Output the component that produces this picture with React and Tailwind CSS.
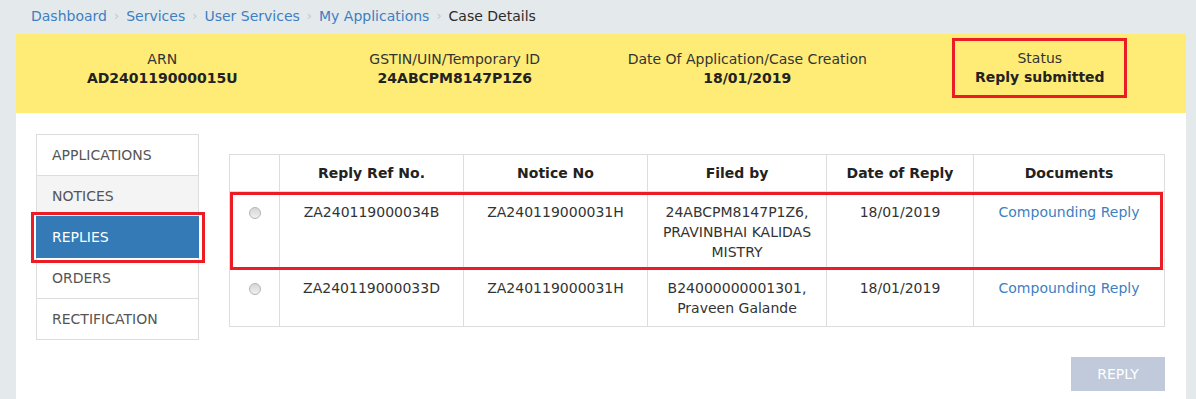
import React from "react";

const crumbs = ["Dashboard", "Services", "User Services", "My Applications"];

const navItems = ["APPLICATIONS", "NOTICES", "REPLIES", "ORDERS", "RECTIFICATION"];

const replies = [
    {
        id: 1,
        refNo: "ZA240119000034B",
        noticeNo: "ZA240119000031H",
        filedBy: ["24ABCPM8147P1Z6,", "PRAVINBHAI KALIDAS", "MISTRY"],
        date: "18/01/2019",
        doc: "Compounding Reply",
    },
    {
        id: 2,
        refNo: "ZA240119000033D",
        noticeNo: "ZA240119000031H",
        filedBy: ["B24000000001301,", "Praveen Galande"],
        date: "18/01/2019",
        doc: "Compounding Reply",
    },
];

function Radio() {
    return (
        <span className="inline-block w-[12px] h-[12px] rounded-full border border-[#b5b5b5] bg-gradient-to-b from-[#d6d6d6] to-[#f0f0f0] align-middle" />
    );
}

function App() {
    return (
        <div className="min-h-screen flex flex-col bg-[#e4e9ec] text-[14px] text-[#333] font-['DejaVu_Sans',Verdana,sans-serif]">

            {/* Breadcrumb */}

            <div className="h-[34px] pl-[31px] flex items-center pb-[2px]">
                {crumbs.map((c) => (
                    <span key={c} className="flex items-center">
                        <span className="text-[#3d7fc2]">{c}</span>
                        <span className="px-[7px] text-[#c2c7cc] text-[13px]">›</span>
                    </span>
                ))}
                <span className="text-[#2b2b2b]">Case Details</span>
            </div>

            <div className="mx-[16px] w-[1170px] flex-1 flex flex-col">

                {/* Case summary */}

                <div className="h-[79px] bg-[#feec76] grid grid-cols-4 items-start pt-[16px] leading-[19px] text-center">
                    <div>
                        <div>ARN</div>
                        <div className="font-bold text-[#222]">AD240119000015U</div>
                    </div>
                    <div>
                        <div>GSTIN/UIN/Temporary ID</div>
                        <div className="font-bold text-[#222]">24ABCPM8147P1Z6</div>
                    </div>
                    <div>
                        <div>Date Of Application/Case Creation</div>
                        <div className="font-bold text-[#222]">18/01/2019</div>
                    </div>
                    <div className="flex justify-center">
                        <div className="w-[175px] -mt-[12px] py-[8px] border-[3px] border-[#ec1c24]">
                            <div>Status</div>
                            <div className="font-bold text-[#222]">Reply submitted</div>
                        </div>
                    </div>
                </div>

                {/* Content */}

                <div className="flex-1 bg-white flex pl-[20px] pr-[22px] pt-[21px] gap-[30px]">

                    <div className="w-[163px] shrink-0 flex flex-col">
                        {navItems.map((item, i) => (
                            <div
                                key={item}
                                className={`relative h-[42px] flex items-center pl-[15px] border ${i > 0 ? "-mt-px" : ""} ${
                                    item === "REPLIES"
                                        ? "bg-[#337ab7] border-[#337ab7] text-white z-10"
                                        : item === "NOTICES"
                                        ? "bg-[#f4f4f4] border-[#dddddd] text-[#555]"
                                        : "bg-white border-[#dddddd] text-[#555]"
                                }`}
                            >
                                {item}
                                {item === "REPLIES" && (
                                    <div className="absolute -left-[6px] -top-[5px] w-[174px] h-[51px] border-[3px] border-[#ec1c24]" />
                                )}
                            </div>
                        ))}
                    </div>

                    <div className="flex-1 pt-[20px] flex flex-col">

                        <div className="relative">
                            <table className="w-[935px] table-fixed border-collapse leading-[20px] text-center">
                                <thead>
                                    <tr className="font-bold text-[#222]">
                                        <th className="w-[50px] border border-[#dddddd] py-[8px]"></th>
                                        <th className="w-[184px] border border-[#dddddd] py-[8px]">Reply Ref No.</th>
                                        <th className="w-[184px] border border-[#dddddd] py-[8px]">Notice No</th>
                                        <th className="w-[179px] border border-[#dddddd] py-[8px]">Filed by</th>
                                        <th className="w-[147px] border border-[#dddddd] py-[8px]">Date of Reply</th>
                                        <th className="w-[191px] border border-[#dddddd] py-[8px]">Documents</th>
                                    </tr>
                                </thead>
                                <tbody>
                                    {replies.map((r) => {
                                        const pad = r.id === 1 ? "pt-[10px] pb-[7px]" : "py-[8px]";
                                        return (
                                            <tr key={r.id} className="align-top">
                                                <td className={`border border-[#dddddd] ${pad}`}>
                                                    <Radio />
                                                </td>
                                                <td className={`border border-[#dddddd] ${pad}`}>{r.refNo}</td>
                                                <td className={`border border-[#dddddd] ${pad}`}>{r.noticeNo}</td>
                                                <td className={`border border-[#dddddd] ${pad}`}>
                                                    {r.filedBy.map((line) => (
                                                        <div key={line}>{line}</div>
                                                    ))}
                                                </td>
                                                <td className={`border border-[#dddddd] ${pad}`}>{r.date}</td>
                                                <td className={`border border-[#dddddd] ${pad}`}>
                                                    <a className="text-[#3d7fc2]">{r.doc}</a>
                                                </td>
                                            </tr>
                                        );
                                    })}
                                </tbody>
                            </table>

                            {/* highlighted row */}
                            <div className="absolute left-[1px] top-[38px] w-[933px] h-[78px] border-[3px] border-[#ec1c24] pointer-events-none" />
                        </div>

                        <div className="w-[936px] flex justify-end mt-[30px]">
                            <button className="w-[94px] h-[34px] bg-[#c0cadb] text-white text-[14px]">
                                REPLY
                            </button>
                        </div>

                    </div>

                </div>

            </div>

        </div>
    );
}

export default App;
